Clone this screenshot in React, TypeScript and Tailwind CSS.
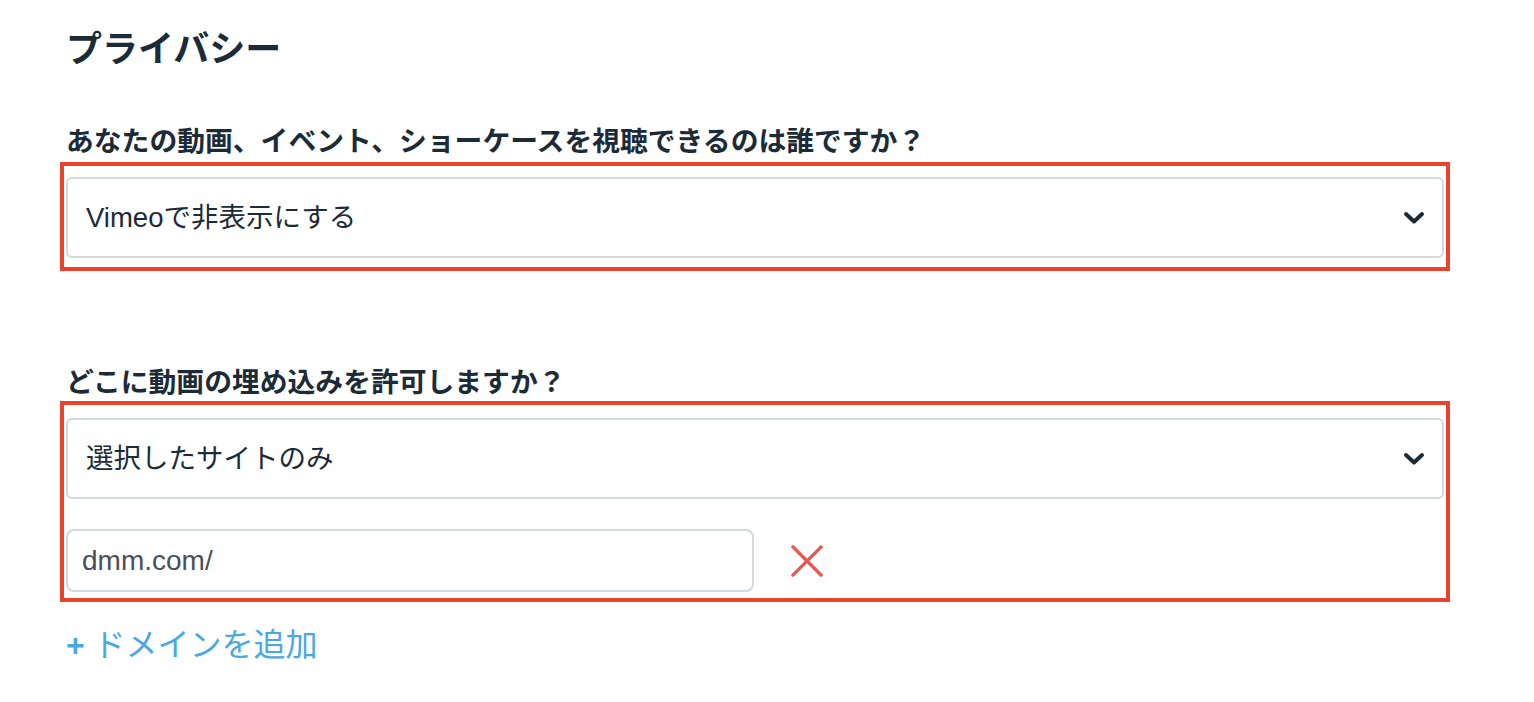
import React, { useState } from 'react';

const FONT = { fontFamily: '"Liberation Sans", "Noto Sans CJK JP", sans-serif' };

function Chevron() {
  return (
    <svg width="22" height="14" viewBox="0 0 22 14" className="shrink-0">
      <path d="M3 3 L11 10.5 L19 3" fill="none" stroke="#1b2b38" strokeWidth="4" strokeLinecap="round" strokeLinejoin="round" />
    </svg>
  );
}

function SelectBox({ value }: { value: string }) {
  return (
    <div className="h-[81px] flex items-center justify-between pl-[18px] pr-[17px] border-2 border-[#d4d9de] rounded-[6px] bg-white">
      <span className="text-[27.5px] text-[#1b2b38]">{value}</span>
      <Chevron />
    </div>
  );
}

export default function App() {
  const [domains] = useState<string[]>(['dmm.com/']);

  return (
    <div className="min-h-[702px] bg-white pl-[66px] pt-[29px]" style={FONT}>
      <h1 className="text-[36px] leading-[42px] font-bold text-[#1b2b38]">プライバシー</h1>

      {/* Who can view */}
      <p className="mt-[54px] text-[27.8px] leading-[34px] font-bold text-[#1b2b38]">
        あなたの動画、イベント、ショーケースを視聴できるのは誰ですか？
      </p>
      <div className="mt-[3px] ml-[-6px] w-[1390px] border-4 border-[#e8432b] pl-[2px] pr-[2px] pt-[11px] pb-[9px]">
        <SelectBox value="Vimeoで非表示にする" />
      </div>

      {/* Embed */}
      <p className="mt-[95px] text-[27.8px] leading-[34px] font-bold text-[#1b2b38]">
        どこに動画の埋め込みを許可しますか？
      </p>
      <div className="mt-[1px] ml-[-6px] w-[1390px] border-4 border-[#e8432b] pl-[2px] pr-[2px] pt-[13px] pb-[6px]">
        <SelectBox value="選択したサイトのみ" />
        {domains.map((d) => (
          <div key={d} className="mt-[30px] flex items-center">
            <div className="w-[688px] h-[63px] flex items-center pl-[14px] border-2 border-[#d4d9de] rounded-[8px]">
              <span className="text-[28px] text-[#4a5057]">{d}</span>
            </div>
            <svg width="34" height="34" viewBox="0 0 34 34" className="ml-[36px]">
              <path d="M3 3 L31 31 M31 3 L3 31" stroke="#e85752" strokeWidth="3.2" strokeLinecap="square" />
            </svg>
          </div>
        ))}
      </div>

      <div className="mt-[25px] text-[32px] leading-[37px] text-[#4aa8e3]">
        <span className="font-bold">+</span> ドメインを追加
      </div>
    </div>
  );
}
